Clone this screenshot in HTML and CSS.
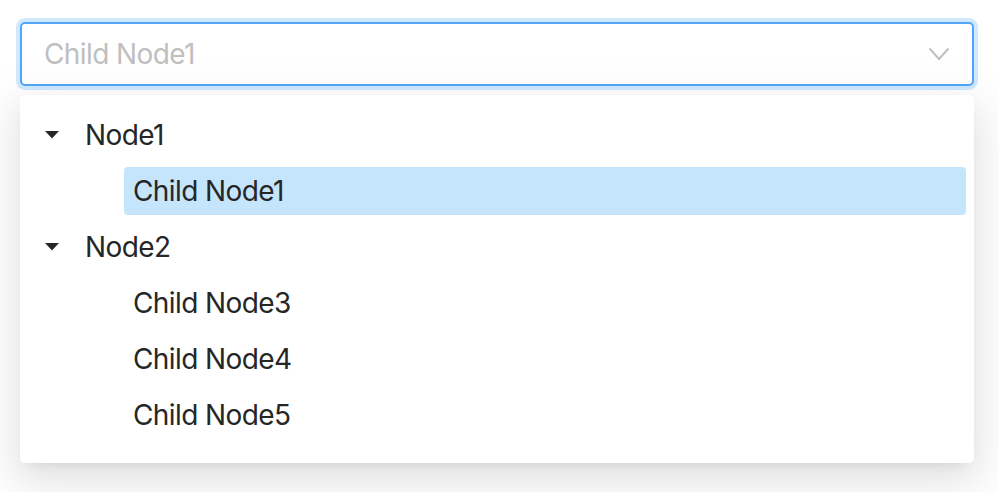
FILE: index.html
```html
<!DOCTYPE html>
<html>
<head>
<meta charset="utf-8">
<link rel="stylesheet" href="styles.css">
</head>
<body>
<div class="page">
  <div class="select">
    <span class="placeholder">Child Node1</span>
    <svg class="arrow" width="22" height="14" viewBox="0 0 22 14"><path d="M1.5 1.5 L11 12 L20.5 1.5" fill="none" stroke="#bfbfbf" stroke-width="2"/></svg>
  </div>
  <div class="dropdown">
    <div class="row">
      <span class="switcher"><svg width="14" height="8" viewBox="0 0 14 8"><path d="M0 0 L14 0 L7 7.5 Z" fill="#262626"/></svg></span>
      <span class="node">Node1</span>
    </div>
    <div class="row">
      <span class="indent"></span><span class="switcher"></span>
      <span class="node selected">Child Node1</span>
    </div>
    <div class="row">
      <span class="switcher"><svg width="14" height="8" viewBox="0 0 14 8"><path d="M0 0 L14 0 L7 7.5 Z" fill="#262626"/></svg></span>
      <span class="node">Node2</span>
    </div>
    <div class="row">
      <span class="indent"></span><span class="switcher"></span>
      <span class="node">Child Node3</span>
    </div>
    <div class="row">
      <span class="indent"></span><span class="switcher"></span>
      <span class="node">Child Node4</span>
    </div>
    <div class="row">
      <span class="indent"></span><span class="switcher"></span>
      <span class="node">Child Node5</span>
    </div>
  </div>
</div>
</body>
</html>
```
FILE: styles.css
```css
html, body {
  margin: 0;
  padding: 0;
  background: #ffffff;
}
body {
  font-family: Inter, "Liberation Sans", sans-serif;
  font-size: 28px;
  letter-spacing: -0.6px;
  color: #262626;
}
.page {
  position: relative;
  padding: 22px 24px 0 20px;
  height: 470px;
}
.select {
  box-sizing: border-box;
  height: 64px;
  border: 2px solid #52a5f8;
  border-radius: 5px;
  box-shadow: 0 0 0 4px rgba(24, 144, 255, 0.2);
  background: #fff;
  display: flex;
  align-items: center;
  padding: 0 22px 0 22px;
}
.placeholder {
  flex: 1;
  color: #bfbfbf;
}
.arrow {
  display: block;
}
.dropdown {
  position: absolute;
  left: 20px;
  top: 95px;
  width: 954px;
  box-sizing: border-box;
  padding: 16px 8px 8px 8px;
  background: #fff;
  border-radius: 5px;
  box-shadow: 0 6px 12px -8px rgba(0,0,0,0.12), 0 12px 32px 0 rgba(0,0,0,0.08), 0 18px 56px 16px rgba(0,0,0,0.05);
}
.row {
  display: flex;
  align-items: center;
  height: 48px;
  margin-bottom: 8px;
}
.row:last-child {
  margin-bottom: 16px;
}
.indent {
  width: 48px;
  flex: none;
}
.switcher {
  width: 48px;
  height: 48px;
  flex: none;
  display: flex;
  align-items: center;
  justify-content: center;
}
.switcher svg {
  display: block;
  margin-top: -1px;
}
.node {
  flex: 1;
  height: 48px;
  line-height: 48px;
  padding: 0 9px;
  border-radius: 4px;
}
.node.selected {
  background: #c4e5fb;
}
```
